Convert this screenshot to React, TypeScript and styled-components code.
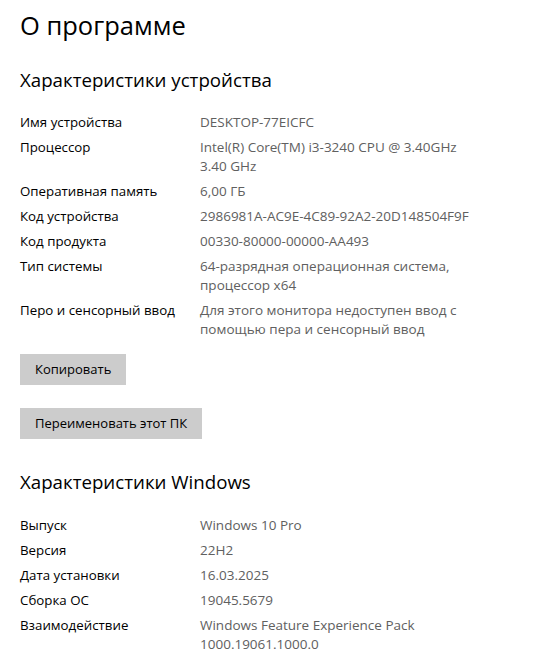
import React from "react";
import styled, { createGlobalStyle } from "styled-components";

const GlobalStyle = createGlobalStyle`
  html, body { margin: 0; padding: 0; background: #ffffff; }
  body { font-family: "Open Sans", "Noto Sans", sans-serif; color: #000; }
`;

const Page = styled.div`
  padding: 8px 20px 0 20px;
  width: 553px;
  height: 658px;
  box-sizing: border-box;
  overflow: hidden;
`;

const Title = styled.h1`
  margin: 0;
  font-weight: 400;
  font-size: 25.5px;
  line-height: 34px;
  color: #000;
`;

const SectionTitle = styled.h2<{ $top: number }>`
  margin: ${(p) => p.$top}px 0 0 0;
  font-weight: 400;
  font-size: 18.7px;
  line-height: 26px;
  color: #000;
`;

const Specs = styled.dl`
  margin: 20.5px 0 0 0;
  display: grid;
  grid-template-columns: 180px 300px;
  row-gap: 6px;
  font-size: 13.3px;
  line-height: 19px;
`;

const Label = styled.dt`
  margin: 0;
  color: #000;
`;

const Value = styled.dd`
  margin: 0;
  color: #606060;
  font-size: 13.5px;
`;

const Actions = styled.div`
  margin-top: 15px;
  display: flex;
  flex-direction: column;
  align-items: flex-start;
  gap: 23px;
`;

const Button = styled.button`
  height: 31px;
  padding: 0 15px;
  border: none;
  background: #cccccc;
  color: #000;
  font-family: "Open Sans", "Noto Sans", sans-serif;
  font-size: 13px;
  line-height: 19px;
  cursor: pointer;
`;

type Spec = [string, string[]];

const device: Spec[] = [
  ["Имя устройства", ["DESKTOP-77EICFC"]],
  ["Процессор", ["Intel(R) Core(TM) i3-3240 CPU @ 3.40GHz", "3.40 GHz"]],
  ["Оперативная память", ["6,00 ГБ"]],
  ["Код устройства", ["2986981A-AC9E-4C89-92A2-20D148504F9F"]],
  ["Код продукта", ["00330-80000-00000-AA493"]],
  ["Тип системы", ["64-разрядная операционная система,", "процессор x64"]],
  ["Перо и сенсорный ввод", ["Для этого монитора недоступен ввод с", "помощью пера и сенсорный ввод"]],
];

const windows: Spec[] = [
  ["Выпуск", ["Windows 10 Pro"]],
  ["Версия", ["22H2"]],
  ["Дата установки", ["16.03.2025"]],
  ["Сборка ОС", ["19045.5679"]],
  ["Взаимодействие", ["Windows Feature Experience Pack", "1000.19061.1000.0"]],
];

function SpecList({ items }: { items: Spec[] }) {
  return (
    <Specs>
      {items.map(([label, lines]) => (
        <React.Fragment key={label}>
          <Label>{label}</Label>
          <Value>
            {lines.map((l, i) => (
              <React.Fragment key={i}>
                {i > 0 && <br />}
                {l}
              </React.Fragment>
            ))}
          </Value>
        </React.Fragment>
      ))}
    </Specs>
  );
}

export default function App() {
  return (
    <>
      <GlobalStyle />
      <Page>
        <Title>О программе</Title>
        <SectionTitle $top={24.5}>Характеристики устройства</SectionTitle>
        <SpecList items={device} />
        <Actions>
          <Button>Копировать</Button>
          <Button>Переименовать этот ПК</Button>
        </Actions>
        <SectionTitle $top={30}>Характеристики Windows</SectionTitle>
        <SpecList items={windows} />
      </Page>
    </>
  );
}
